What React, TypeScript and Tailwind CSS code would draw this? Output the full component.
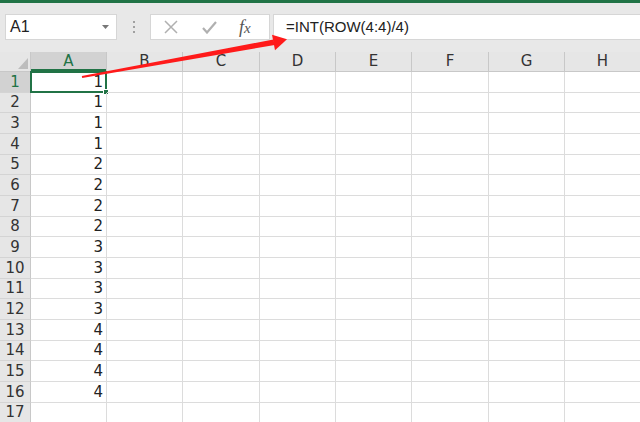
import React from 'react';

const COLS = ['A', 'B', 'C', 'D', 'E', 'F', 'G', 'H'];
const COL_W = ['w-[76px]', 'w-[76px]', 'w-[77px]', 'w-[76px]', 'w-[76px]', 'w-[77px]', 'w-[76px]', 'w-[76px]'];
const VALUES = [1, 1, 1, 1, 2, 2, 2, 2, 3, 3, 3, 3, 4, 4, 4, 4];

function NameBox() {
  return (
    <div className="ml-[5px] w-[112px] h-[26px] bg-white border border-[#d6d6d6] flex items-center justify-between pl-[4px] pr-[7px]">
      <span className="text-[16px] text-[#222]">A1</span>
      <svg width="7" height="4" viewBox="0 0 7 4">
        <path d="M0 0h7L3.5 4z" fill="#777" />
      </svg>
    </div>
  );
}

function FormulaButtons() {
  return (
    <div className="w-[120px] h-[26px] bg-white border border-[#d6d6d6] flex items-center">
      <svg className="ml-[13px]" width="14" height="14" viewBox="0 0 14 14">
        <path d="M1 1l12 12M13 1L1 13" stroke="#b0b0b0" strokeWidth="1.5" fill="none" />
      </svg>
      <svg className="ml-[24px]" width="15" height="13" viewBox="0 0 15 13">
        <path d="M1 7l4 4.5L14 1" stroke="#b0b0b0" strokeWidth="2.2" fill="none" />
      </svg>
      <span className="ml-[22px] italic text-[#555] text-[18px] leading-none" style={{ fontFamily: '"Liberation Serif", serif' }}>
        f<span className="text-[15px]">x</span>
      </span>
    </div>
  );
}

export default function App() {
  return (
    <div className="w-[640px] h-[422px] overflow-hidden bg-white relative" style={{ fontFamily: '"Liberation Sans", Arial, sans-serif' }}>
      <div className="h-[3px] bg-[#217346]" />
      {/* toolbar */}
      <div className="h-[49px] bg-[#e8e8e8] flex items-start pt-[11px]">
        <NameBox />
        <div className="w-[33px] h-[26px] flex flex-col items-center justify-center gap-[3px]">
          <div className="w-[2px] h-[2px] bg-[#a0a0a0]" />
          <div className="w-[2px] h-[2px] bg-[#a0a0a0]" />
          <div className="w-[2px] h-[2px] bg-[#a0a0a0]" />
        </div>
        <FormulaButtons />
        <div className="ml-[3px] flex-1 h-[26px] bg-white border border-[#d6d6d6] border-r-0 flex items-center pl-[12px]">
          <span className="text-[15px] text-[#222]">=INT(ROW(4:4)/4)</span>
        </div>
      </div>

      {/* sheet */}
      <div style={{ fontFamily: '"DejaVu Sans", sans-serif' }}>
        {/* column headers */}
        <div className="flex h-[20px] bg-[#e6e6e6] border-b border-[#c8c8c8]">
          <div className="w-[31px] shrink-0 border-r border-[#c8c8c8] relative">
            <svg className="absolute right-[2px] bottom-[2px]" width="10" height="11" viewBox="0 0 10 11">
              <path d="M10 0v11H0z" fill="#bdbdbd" />
            </svg>
          </div>
          {COLS.map((c, i) => (
            <div
              key={c}
              className={`${COL_W[i]} shrink-0 border-r border-[#c8c8c8] flex items-center justify-center text-[15px] ${i === 0 ? 'bg-[#d2d2d2] text-[#217346] shadow-[inset_0_-2px_0_#217346]' : 'text-[#333]'}`}
            >
              {c}
            </div>
          ))}
        </div>

        {/* rows */}
        {Array.from({ length: 17 }).map((_, r) => (
          <div key={r} className={`flex ${r % 3 === 1 ? 'h-[20px]' : 'h-[21px]'}`}>
            <div
              className={`w-[31px] shrink-0 border-r border-b border-r-[#c8c8c8] border-b-[#d4d4d4] flex items-center justify-center text-[15px] ${r === 0 ? 'bg-[#d2d2d2] text-[#217346]' : 'bg-[#e6e6e6] text-[#333]'}`}
            >
              {r + 1}
            </div>
            {COLS.map((c, i) => (
              <div key={c} className={`${COL_W[i]} shrink-0 border-r border-b border-[#dcdcdc] relative flex items-center justify-end pr-[3px] text-[15px] text-[#222]`}>
                {i === 0 && r < 16 ? VALUES[r] : null}
                {i === 0 && r === 0 && (
                  <>
                    <div className="absolute left-[-1px] top-[-1px] right-[-1px] bottom-[-1px] border-2 border-[#217346]" />
                    <div className="absolute right-[-3px] bottom-[-3px] w-[6px] h-[6px] bg-[#217346] border border-white" />
                  </>
                )}
              </div>
            ))}
          </div>
        ))}
      </div>

      {/* red arrow annotation */}
      <svg className="absolute left-0 top-0 pointer-events-none" width="640" height="422" viewBox="0 0 640 422">
        <polygon points="82.2,78 81.8,76 273.3,39.5 274.7,45" fill="#ff1a1a" />
        <polygon points="272,34.8 287,39.3 275,50.2" fill="#ff1a1a" />
      </svg>
    </div>
  );
}
